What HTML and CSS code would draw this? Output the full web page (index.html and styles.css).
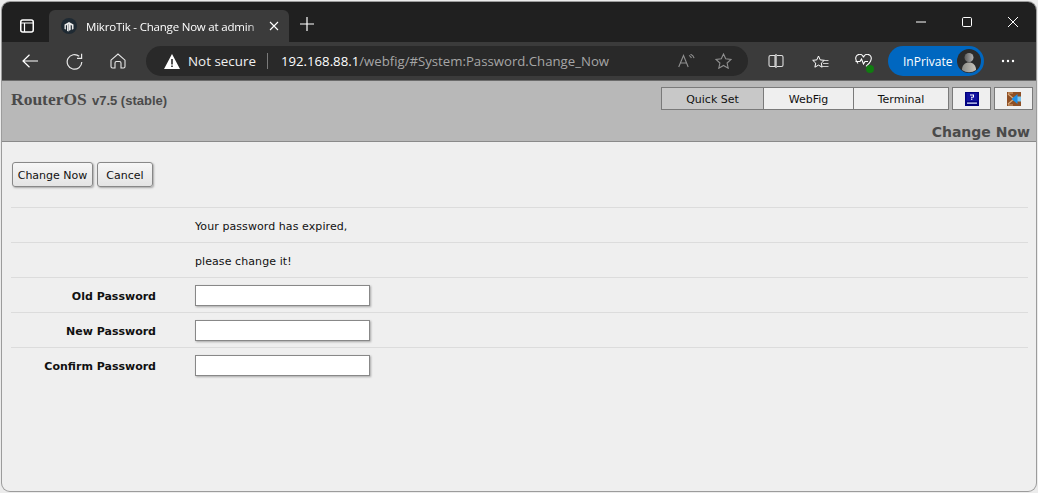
FILE: index.html
```html
<!DOCTYPE html>
<html lang="en">
<head>
<meta charset="utf-8">
<title>MikroTik - Change Now at admin</title>
<link rel="stylesheet" href="styles.css">
</head>
<body>
<div class="window">
  <div class="tabstrip">
    <svg class="ic-tabs" width="16" height="16" viewBox="0 0 16 16"><rect x="1.750" y="2" width="12.500" height="12" rx="2" fill="none" stroke="#fff" stroke-width="1.500"/><path d="M2 5h12M5.500 5v9" fill="none" stroke="#fff" stroke-width="1.200"/></svg>
    <div class="tab">
      <svg class="favicon" width="16" height="16" viewBox="0 0 16 16"><circle cx="8" cy="8" r="8" fill="#1f2a33"/><path d="M3.500 6.500 8 4l4.500 2.500v4.500l-1.600.7V7.600l-1.200-.6v5l-1.700.7V6.300L8 6l-.3.2v7.400L6 13V7L4.900 7.600v4l-1.400-.7z" fill="#e8e8e8"/></svg>
      <span class="tab-title">MikroTik - Change Now at admin</span>
      <svg width="10" height="10" viewBox="0 0 10 10"><path d="M1 1l8 8M9 1l-8 8" stroke="#fff" stroke-width="1.100"/></svg>
    </div>
    <svg class="ic-plus" width="14" height="14" viewBox="0 0 14 14"><path d="M7 0v14M0 7h14" stroke="#fff" stroke-width="1.200"/></svg>
    <div class="winctl">
      <svg width="10" height="10" viewBox="0 0 10 10"><path d="M0 5h10" stroke="#fff" stroke-width="1"/></svg>
      <svg width="10" height="10" viewBox="0 0 10 10"><rect x=".5" y=".5" width="9" height="9" rx="1.200" fill="none" stroke="#fff"/></svg>
      <svg width="10" height="10" viewBox="0 0 10 10"><path d="M0 0l10 10M10 0L0 10" stroke="#fff" stroke-width="1"/></svg>
    </div>
  </div>
  <div class="toolbar">
    <svg class="ic-back" width="16" height="14" viewBox="0 0 16 14"><path d="M16 7H1M7.500 .8 1 7l6.500 6.200" fill="none" stroke="#fff" stroke-width="1.200"/></svg>
    <svg class="ic-reload" width="17" height="17" viewBox="0 0 17 17"><path d="M13.200 3.300A7.300 7.300 0 1 0 15.800 9" fill="none" stroke="#e8e8e8" stroke-width="1.200"/><path d="M15.600 .8v4.600H11" fill="none" stroke="#e8e8e8" stroke-width="1.200"/></svg>
    <svg class="ic-home" width="16" height="16" viewBox="0 0 16 16"><path d="M1 7.200 8 1l7 6.200v6.300a1.500 1.500 0 0 1-1.500 1.500H11V10a1.500 1.500 0 0 0-1.500-1.500h-3A1.500 1.500 0 0 0 5 10v5H2.500A1.500 1.500 0 0 1 1 13.500z" fill="none" stroke="#e8e8e8" stroke-width="1.100"/></svg>
    <div class="addressbar">
      <svg class="ic-warn" width="16" height="15" viewBox="0 0 16 15"><path d="M8 0 16 15H0z" fill="#fff"/><path d="M7.200 5h1.600v5.500H7.200zM7.200 11.500h1.600v1.600H7.200z" fill="#292929"/></svg>
      <span class="not-secure">Not secure</span>
      <span class="addr-sep"></span>
      <span class="url"><span class="url-host">192.168.88.1</span>/webfig/#System:Password.Change_Now</span>
      <svg class="ic-read" width="17" height="14" viewBox="0 0 17 14"><path d="M.7 13 5.500 1.500 10.200 13M2.500 9h6M11 1.500c1.200.5 2 1.300 2.400 2.500M12.500.3c1.800.7 3 2 3.600 3.800" fill="none" stroke="#8f8f8f" stroke-width="1.100"/></svg>
      <svg class="ic-star" width="17" height="16" viewBox="0 0 17 16"><path d="M8.500 1l2.200 4.800 5.300.6-3.900 3.600 1.100 5.200-4.700-2.700-4.700 2.700 1.100-5.200L1 6.400l5.300-.6z" fill="none" stroke="#8f8f8f" stroke-width="1.100"/></svg>
    </div>
    <svg class="ic-split" width="16" height="16" viewBox="0 0 16 16"><path d="M7 2.500H2.500A1.500 1.500 0 0 0 1 4v8a1.500 1.500 0 0 0 1.500 1.500H7zM9 2.500h4.500A1.500 1.500 0 0 1 15 4v8a1.500 1.500 0 0 1-1.500 1.500H9" fill="none" stroke="#e0e0e0" stroke-width="1.100"/><path d="M8 1v14" stroke="#e0e0e0" stroke-width="1.300"/></svg>
    <svg class="ic-fav" width="17" height="16" viewBox="0 0 17 16"><path d="M6.500 1l1.700 3.900 4.100.4-3 2.800.8 4.100-3.600-2.100L2.900 12.200l.8-4.100-3-2.800 4.100-.4z" fill="none" stroke="#fff" stroke-width="1" transform="translate(0 2)"/><path d="M11.500 7.500h5M11 10.500h5.500M9 13.500h7.500" stroke="#d8d8d8" stroke-width=".9"/></svg>
    <span class="ic-health">
      <svg width="17" height="15" viewBox="0 0 17 15"><path d="M3 9.500C1.700 8 .8 6.800.8 5A3.800 3.800 0 0 1 8.500 3.500 3.800 3.800 0 0 1 16.200 5c0 1.800-1 3-2.200 4.500L11 12.300M.5 7.500h4.500l1.500-2.500 2 5 1.500-2.500h3" fill="none" stroke="#fff" stroke-width="1.100"/></svg>
      <span class="health-dot"></span>
    </span>
    <div class="inprivate">
      <span class="inprivate-text">InPrivate</span>
      <span class="avatar"><svg width="24" height="24" viewBox="0 0 24 24"><defs><linearGradient id="av-head" x1="0" y1="0" x2="1" y2="0"><stop offset="0" stop-color="#5c5c5c"/><stop offset="1" stop-color="#b4b4b4"/></linearGradient><linearGradient id="av-body" x1="0" y1="0" x2="1" y2="0"><stop offset="0" stop-color="#8c8c86"/><stop offset="1" stop-color="#c8c4bc"/></linearGradient></defs><circle cx="12" cy="12" r="12" fill="#2b2b2b"/><circle cx="12" cy="8.500" r="4.500" fill="url(#av-head)"/><path d="M5 21c0-5 3-7.500 7-7.500s7 2.500 7 7.500a12 12 0 0 1-14 0z" fill="url(#av-body)"/></svg></span>
    </div>
    <svg class="ic-more" width="14" height="4" viewBox="0 0 14 4"><circle cx="2" cy="2" r="1.200" fill="#fff"/><circle cx="7" cy="2" r="1.200" fill="#fff"/><circle cx="12" cy="2" r="1.200" fill="#fff"/></svg>
  </div>
  <div class="page">
    <header class="page-head">
      <div class="head-top">
        <div class="brand"><span class="brand-name">RouterOS</span> <span class="brand-ver">v7.5 (stable)</span></div>
        <nav class="modes">
          <div class="mode-group">
            <a class="mode mode-quick mode-active">Quick Set</a>
            <a class="mode mode-webfig">WebFig</a>
            <a class="mode mode-term">Terminal</a>
          </div>
          <a class="mode mode-icon">
            <svg width="14" height="14" viewBox="0 0 14 14"><rect width="14" height="14" fill="#000080"/><path d="M1.500 1h11v8h-11z" fill="#1212a0"/><path d="M2 10.500h10v1.200H2z" fill="#dfe8ff"/><path d="M5 2.500h4v3H7.300v1H6.200V4.700H8V3.500H5zM6.200 7h1.100v1H6.200z" fill="#fff"/></svg>
          </a>
          <a class="mode mode-icon">
            <svg width="14" height="14" viewBox="0 0 14 14"><rect width="14" height="14" fill="#8f4f24"/><path d="M1 2l6 5-6 5M1 1h5M1 13h5" fill="none" stroke="#d8a878" stroke-width="1.200"/><path d="M10 4.500h4v5h-4z" fill="#7cc4ec"/><path d="M4.500 7 10.500 2v10z" fill="#1e90e8"/></svg>
          </a>
        </nav>
      </div>
      <h1 class="page-title">Change Now</h1>
    </header>
    <main class="content">
      <div class="actions">
        <button class="btn btn-main" type="button">Change Now</button>
        <button class="btn btn-cancel" type="button">Cancel</button>
      </div>
      <div class="form">
        <div class="row"><span class="label"></span><span class="value">Your password has expired,</span></div>
        <div class="row"><span class="label"></span><span class="value">please change it!</span></div>
        <div class="row"><span class="label">Old Password</span><input class="field" type="password"></div>
        <div class="row"><span class="label">New Password</span><input class="field" type="password"></div>
        <div class="row"><span class="label">Confirm Password</span><input class="field" type="password"></div>
      </div>
    </main>
  </div>
</div>
</body>
</html>
```

FILE: styles.css
```css
* { box-sizing: border-box; }
html, body { height: 100%; }
body {
  margin: 0;
  padding: 2px;
  background: #ececec;
  overflow: hidden;
  font-family: "DejaVu Sans", Verdana, sans-serif;
}
.window {
  height: 489px;
  display: flex;
  flex-direction: column;
  border-radius: 8px;
  overflow: hidden;
  background: #efefef;
  box-shadow: 0 0 0 1px #9c9c9c;
}
.tabstrip {
  height: 40px;
  flex: none;
  display: flex;
  align-items: flex-end;
  background: #202020;
}
.ic-tabs { margin: 0 0 8px 17px; }
.tab {
  width: 240px;
  height: 32px;
  margin-left: 14px;
  padding: 0 10px 0 12px;
  display: flex;
  align-items: center;
  background: #3b3b3b;
  border-radius: 6px 6px 0 0;
  color: #fff;
  font: 11.500px "Open Sans", "Noto Sans", sans-serif;
}
.favicon { flex: none; margin-right: 9px; }
.tab-title {
  flex: 1;
  min-width: 0;
  white-space: nowrap;
  letter-spacing: -.2px;
  -webkit-mask-image: linear-gradient(90deg, #000 92%, transparent);
  mask-image: linear-gradient(90deg, #000 92%, transparent);
  margin-right: 7px;
}
.tab svg:last-child { flex: none; }
.ic-plus { margin: 0 0 11px 11px; }
.winctl {
  margin-left: auto;
  align-self: flex-start;
  display: flex;
  gap: 36px;
  padding: 15px 18px 0 0;
}
.toolbar {
  height: 38px;
  flex: none;
  display: flex;
  align-items: center;
  background: #3b3b3b;
}
.ic-back { margin-left: 20px; flex: none; }
.ic-reload { margin-left: 28px; flex: none; }
.ic-home { margin-left: 27px; flex: none; }
.addressbar {
  width: 602px;
  height: 30px;
  margin-left: 20px;
  flex: none;
  display: flex;
  align-items: center;
  border-radius: 15px;
  background: #292929;
  font: 13.200px "Open Sans", "Noto Sans", sans-serif;
  padding-left: 18px;
}
.not-secure { margin-left: 8px; color: #f0f0f0; font-size: 13.400px; }
.addr-sep { width: 1px; height: 16px; background: #7a7a7a; margin: 0 13px 0 11px; }
.url { color: #a6a6a6; white-space: nowrap; }
.url-host { color: #fff; }
.ic-read { margin-left: auto; flex: none; }
.ic-star { margin: 0 16px 0 20px; flex: none; }
.ic-split { margin-left: 20px; flex: none; }
.ic-fav { margin-left: 28px; flex: none; }
.ic-health { margin-left: 26px; position: relative; display: block; height: 15px; flex: none; }
.ic-health svg { display: block; }
.health-dot {
  position: absolute;
  right: -2px;
  bottom: -4px;
  width: 8px;
  height: 8px;
  border-radius: 50%;
  background: #107c10;
}
.inprivate {
  width: 96px;
  height: 30px;
  margin-left: 16px;
  flex: none;
  display: flex;
  align-items: center;
  justify-content: space-between;
  padding: 0 3px 0 15px;
  border-radius: 15px;
  background: #0067c0;
  color: #fff;
  font: 12px "Open Sans", "Noto Sans", sans-serif;
}
.avatar { width: 24px; height: 24px; display: block; }
.avatar svg { display: block; }
.ic-more { margin-left: 17px; flex: none; }
.page {
  flex: 1;
  min-height: 0;
  display: flex;
  flex-direction: column;
  border-top: 1px solid #6b6b6b;
}
.page-head {
  height: 61px;
  flex: none;
  display: flex;
  flex-direction: column;
  background: #b8b8b8;
  border-bottom: 1px solid #8a8a8a;
}
.head-top {
  display: flex;
  justify-content: space-between;
  padding: 6px 3px 0 9px;
}
.brand { color: #4a4a4a; white-space: nowrap; line-height: 22px; padding-top: 2px; }
.brand-name { font: bold 17.500px "Liberation Serif", serif; }
.brand-ver { font: bold 13px "Liberation Sans", sans-serif; }
.modes { display: flex; gap: 3px; }
.mode-group { display: flex; }
.mode {
  height: 23px;
  display: flex;
  align-items: center;
  justify-content: center;
  border: 1px solid #7a7a7a;
  background: #efefef;
  color: #111;
  font-size: 11px;
}
.mode-group .mode { padding-top: 2px; }
.mode-group .mode + .mode { border-left: 0; }
.mode-quick { width: 103px; }
.mode-webfig { width: 90px; }
.mode-term { width: 95px; }
.mode-active { background: #c8c8c8; }
.mode-icon { width: 39px; }
.page-title {
  margin: auto 6px 0 0;
  text-align: right;
  font-size: 14px;
  line-height: 17px;
  font-weight: bold;
  color: #4a4a4a;
}
.content { flex: 1; padding: 20px 8px 0 9px; }
.actions { display: flex; gap: 4px; padding-left: 1px; height: 45px; }
.btn {
  height: 25px;
  padding: 2px 0 0;
  border: 1px solid #888;
  border-radius: 3px;
  background: linear-gradient(#f6f6f6, #e4e4e4);
  box-shadow: 1px 1px 2px rgba(0, 0, 0, .3);
  color: #111;
  font: 11px "DejaVu Sans", Verdana, sans-serif;
}
.btn-main { width: 81px; }
.btn-cancel { width: 56px; }
.row {
  height: 35px;
  display: flex;
  align-items: center;
  border-top: 1px solid #dcdcdc;
  font-size: 11px;
  color: #111;
}
.label {
  width: 145px;
  flex: none;
  margin-right: 39px;
  padding-top: 2px;
  text-align: right;
  font-weight: bold;
}
.value { padding-top: 2px; letter-spacing: .08px; }
.field {
  width: 175px;
  height: 21px;
  padding: 0;
  border: 1px solid #888;
  background: #fff;
  box-shadow: 1px 1px 2px rgba(0, 0, 0, .3);
}
```
